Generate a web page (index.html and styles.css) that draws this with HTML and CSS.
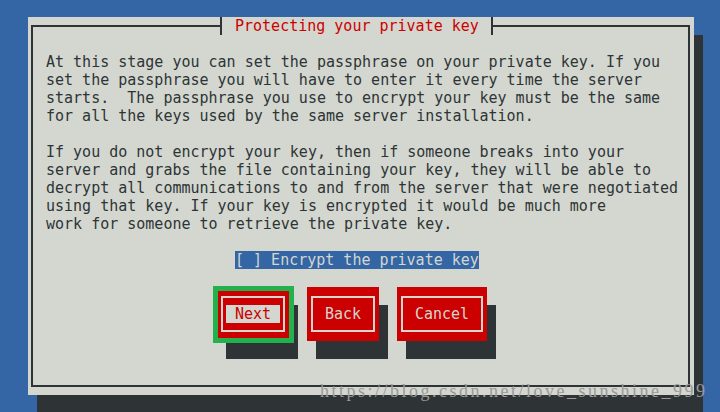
FILE: index.html
```html
<!DOCTYPE html>
<html lang="en">

<head>
    <meta charset="UTF-8">
    <title>Protecting your private key</title>
    <link rel="stylesheet" href="styles.css">
</head>

<body>
    <main class="screen">
        <section class="dialog">
            <div class="frame">
                <h1 class="title">Protecting your private key</h1>
                <p class="text">At this stage you can set the passphrase on your private key. If you
set the passphrase you will have to enter it every time the server
starts.  The passphrase you use to encrypt your key must be the same
for all the keys used by the same server installation.</p>
                <p class="text">If you do not encrypt your key, then if someone breaks into your
server and grabs the file containing your key, they will be able to
decrypt all communications to and from the server that were negotiated
using that key. If your key is encrypted it would be much more
work for someone to retrieve the private key.</p>
                <label class="check">[ ] Encrypt the private key</label>
                <nav class="buttons">
                    <button class="btn focused"><span><em>Next</em></span></button>
                    <button class="btn"><span>Back</span></button>
                    <button class="btn wide"><span>Cancel</span></button>
                </nav>
            </div>
        </section>
        <div class="watermark">https://blog.csdn.net/love_sunshine_999</div>
    </main>
</body>

</html>
```

FILE: styles.css
```css
* {
    box-sizing: border-box;
}

body {
    margin: 0;
    height: 412px;
    overflow: hidden;
    background: #3465a4;
    font-family: "DejaVu Sans Mono", monospace;
    font-size: 15px;
    line-height: 18px;
    color: #2e3436;
}

.screen {
    position: relative;
    height: 412px;
    padding: 17px 0 0 28px;
}

.dialog {
    width: 666px;
    height: 378px;
    padding: 8px 4px 8px 3px;
    background: #d3d7cf;
    box-shadow: 9px 18px 0 #2e3436;
}

.frame {
    position: relative;
    height: 100%;
    padding: 26px 0 0 13px;
    border: 2px solid #2e3436;
}

.title {
    position: absolute;
    top: -10px;
    left: 187px;
    height: 18px;
    margin: 0;
    padding: 0 12px 0 13px;
    font: inherit;
    color: #cc0000;
    background: #d3d7cf;
    border-left: 2px solid #2e3436;
    border-right: 2px solid #2e3436;
}

.text {
    margin: 0 0 18px;
    white-space: pre;
}

.check {
    display: block;
    width: max-content;
    margin-left: 189px;
    background: #3465a4;
    color: #d3d7cf;
}

.buttons {
    display: flex;
    gap: 18px;
    margin: 18px 0 0 171px;
}

.btn {
    position: relative;
    width: 72px;
    height: 54px;
    padding: 9px 4px;
    border: none;
    background: #cc0000;
    box-shadow: 9px 18px 0 #2e3436;
    font: inherit;
    color: #d3d7cf;
    cursor: pointer;
}

.btn.wide {
    width: 90px;
}

.btn span {
    display: flex;
    align-items: center;
    justify-content: center;
    height: 36px;
    border: 2px solid #d3d7cf;
}

.btn em {
    font-style: normal;
    padding: 0 9px;
    background: #d3d7cf;
    color: #cc0000;
}

.focused::after {
    content: "";
    position: absolute;
    top: -1px;
    left: -4px;
    right: -5px;
    bottom: -2px;
    border: 5px solid #22b14c;
}

.watermark {
    position: absolute;
    left: 320px;
    top: 381px;
    font-family: "Liberation Serif", serif;
    font-size: 18px;
    line-height: 20px;
    letter-spacing: 2.5px;
    color: #9a9a9a;
}
```
